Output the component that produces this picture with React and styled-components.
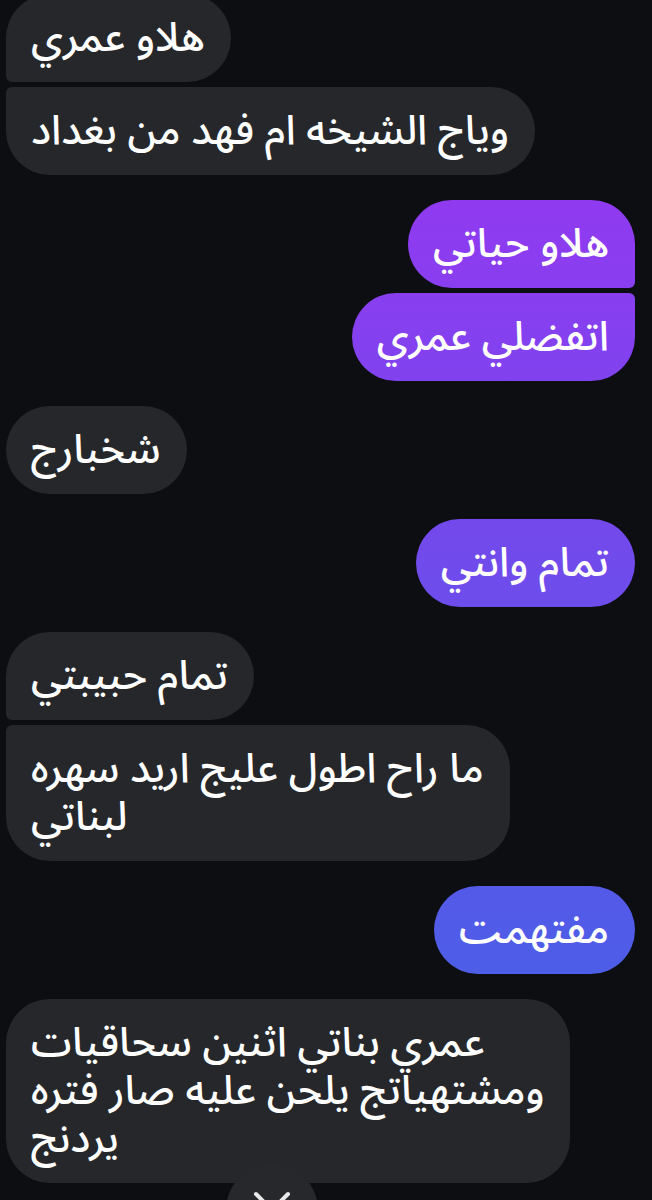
import React from 'react';
import styled, { createGlobalStyle } from 'styled-components';

const GlobalStyle = createGlobalStyle`
  html, body {
    margin: 0;
    padding: 0;
    background: #0c0e12;
  }
  body {
    font-family: "Noto Sans Arabic", "DejaVu Sans", "Noto Sans", sans-serif;
  }
`;

const Screen = styled.div`
  position: relative;
  width: 652px;
  height: 1200px;
  overflow: hidden;
  background: #0c0e12;
`;

const Thread = styled.div`
  display: flex;
  flex-direction: column;
  gap: 25px;
  margin-top: -6px;
  padding: 0 17px 0 6px;
`;

const Group = styled.div`
  display: flex;
  flex-direction: column;
  align-items: ${(p) => (p.$mine ? 'flex-end' : 'flex-start')};
  gap: 5px;
`;

const BIG = '44px';
const SMALL = '6px';

const Bubble = styled.div`
  box-sizing: border-box;
  width: fit-content;
  padding: 20px 26px 20px 25px;
  font-size: 41px;
  font-weight: 500;
  line-height: 48px;
  color: #ffffff;
  white-space: nowrap;
  direction: ltr;
  text-align: left;
  background: ${(p) =>
    p.$mine
      ? 'linear-gradient(180deg, #a231f3 0%, #3968e4 100%) fixed'
      : '#25272b'};
  border-radius: ${(p) => {
    const top = p.$first ? BIG : SMALL;
    const bottom = p.$last ? BIG : SMALL;
    return p.$mine
      ? `${BIG} ${top} ${bottom} ${BIG}`
      : `${top} ${BIG} ${BIG} ${bottom}`;
  }};
`;

const Line = styled.span`
  display: block;
  unicode-bidi: plaintext;
`;

const ScrollButton = styled.div`
  position: absolute;
  left: 226px;
  top: 1164px;
  width: 92px;
  height: 92px;
  border-radius: 50%;
  background: #26282c;
  display: flex;
  align-items: center;
  justify-content: center;
`;

const groups = [
  { mine: false, messages: [['هلاو عمري'], ['وياج الشيخه ام فهد من بغداد']] },
  { mine: true, messages: [['هلاو حياتي'], ['اتفضلي عمري']] },
  { mine: false, messages: [['شخبارج']] },
  { mine: true, messages: [['تمام وانتي']] },
  {
    mine: false,
    messages: [['تمام حبيبتي'], ['ما راح اطول عليج اريد سهره', 'لبناتي']],
  },
  { mine: true, messages: [['مفتهمت']] },
  {
    mine: false,
    messages: [
      ['عمري بناتي اثنين سحاقيات', 'ومشتهياتج يلحن عليه صار فتره', 'يردنج'],
    ],
  },
];

export default function App() {
  return (
    <Screen>
      <GlobalStyle />
      <Thread>
        {groups.map((g, gi) => (
          <Group key={gi} $mine={g.mine}>
            {g.messages.map((lines, mi) => (
              <Bubble
                key={mi}
                $mine={g.mine}
                $first={mi === 0}
                $last={mi === g.messages.length - 1}
              >
                {lines.map((l, li) => (
                  <Line key={li}>{l}</Line>
                ))}
              </Bubble>
            ))}
          </Group>
        ))}
      </Thread>
      <ScrollButton>
        <svg width="40" height="40" viewBox="0 0 40 40" fill="none">
          <path
            d="M4 4 L36 36 M36 4 L4 36"
            stroke="#e9e9ea"
            strokeWidth="4"
            strokeLinecap="round"
          />
        </svg>
      </ScrollButton>
    </Screen>
  );
}
